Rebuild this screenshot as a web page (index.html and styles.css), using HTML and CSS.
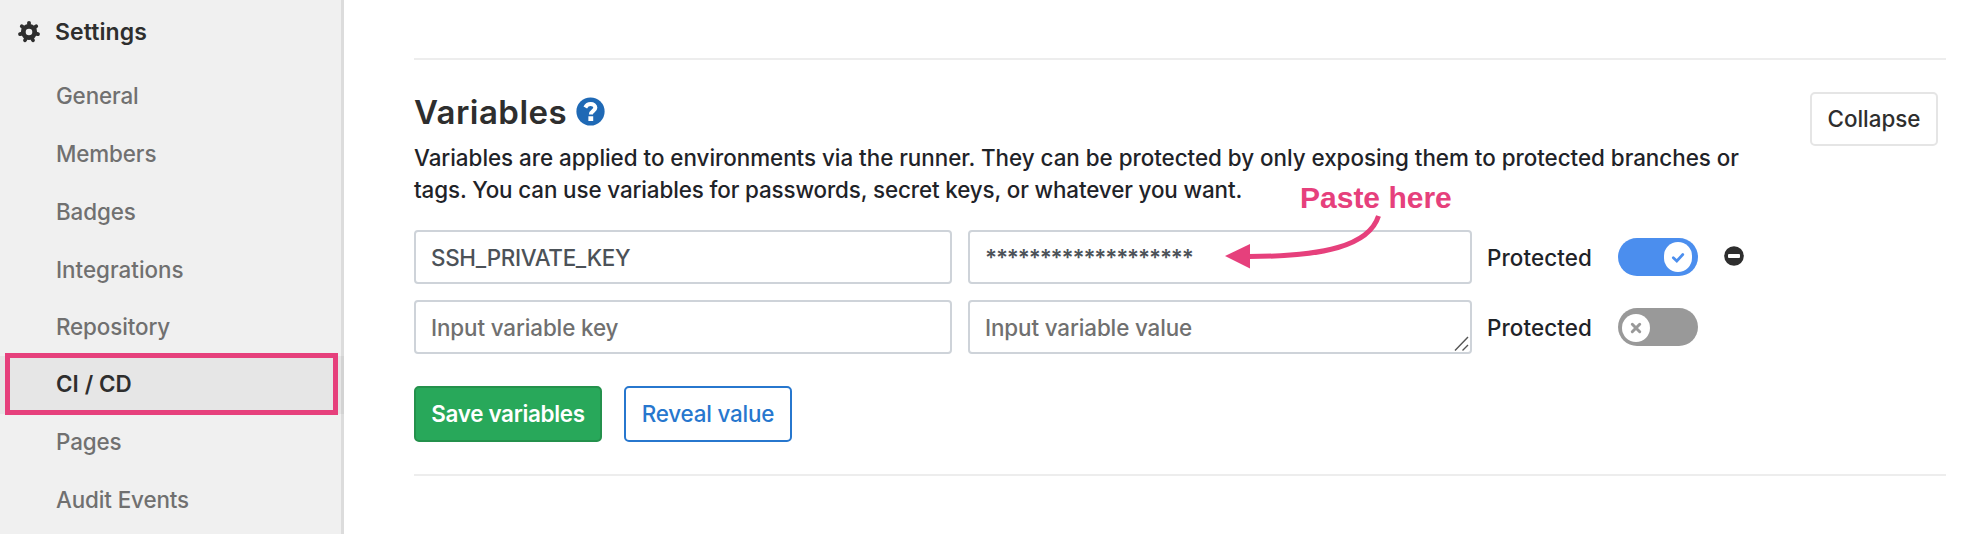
FILE: index.html
```html
<!DOCTYPE html>
<html lang="en">
<head>
<meta charset="utf-8">
<title>CI / CD Settings</title>
<link rel="stylesheet" href="styles.css">
</head>
<body>
<div class="page">
  <aside class="sidebar">
    <div class="sidebar-title">
      <svg class="gear" viewBox="0 0 24 24"><circle cx="12" cy="12" r="5.700" fill="none" stroke="#2e2e2e" stroke-width="4.800"/><g stroke="#2e2e2e" stroke-width="3.800" stroke-linecap="round"><path id="tooth" d="M12 4V2.800"/><use href="#tooth" transform="rotate(51.43 12 12)"/><use href="#tooth" transform="rotate(102.86 12 12)"/><use href="#tooth" transform="rotate(154.29 12 12)"/><use href="#tooth" transform="rotate(205.71 12 12)"/><use href="#tooth" transform="rotate(257.14 12 12)"/><use href="#tooth" transform="rotate(308.57 12 12)"/></g></svg>
      <span class="t-settings">Settings</span>
    </div>
    <nav class="menu">
      <a class="item"><span>General</span></a>
      <a class="item"><span>Members</span></a>
      <a class="item"><span>Badges</span></a>
      <a class="item"><span class="ls-0">Integrations</span></a>
      <a class="item item-short"><span>Repository</span></a>
      <a class="item item-active"><span class="ls-1">CI / CD</span><i class="marker"></i></a>
      <a class="item"><span>Pages</span></a>
      <a class="item"><span>Audit Events</span></a>
    </nav>
  </aside>
  <main class="content">
    <section class="variables">
      <header class="header">
        <div class="intro">
          <h4 class="heading"><span class="t-heading">Variables</span>
            <svg class="help" viewBox="0 0 30 30"><circle cx="15" cy="15" r="14.600" fill="#1f69b5"/><path d="M9.600 10.800C10.900 8.400 12.700 7.300 15.100 7.300C17.900 7.300 20 8.900 20 11.200C20 14.300 15.400 14.500 15.400 18.100" fill="none" stroke="#fff" stroke-width="4.200"/><path d="M12.800 20h5v4.800h-5z" fill="#fff"/></svg>
          </h4>
          <p class="desc"><span class="t-desc">Variables are applied to environments via the runner. They can be protected by only exposing them to protected branches or</span><br><span>tags. You can use variables for passwords, secret keys, or whatever you want.</span></p>
        </div>
        <button class="btn btn-collapse"><span class="ls-0">Collapse</span></button>
      </header>
      <div class="row">
        <div class="field field-key"><span class="t-key">SSH_PRIVATE_KEY</span></div>
        <div class="field field-value"><span class="t-stars">*******************</span>
          <div class="note"><span class="note-text">Paste here</span>
            <svg class="arrow" viewBox="0 0 160 60"><path d="M153.500 6C144 36 98 46.500 24 46.500" fill="none" stroke="#e6407c" stroke-width="5"/><path d="M0 46L25 34V58.500Z" fill="#e6407c"/></svg>
          </div>
        </div>
        <span class="label"><span class="ls-1">Protected</span></span>
        <span class="toggle toggle-on"><svg class="knob" viewBox="0 0 28 30"><rect width="28" height="30" rx="14" fill="#fff"/><path d="M9.300 15.700L12.800 19L18.800 12.500" fill="none" stroke="#4b8eee" stroke-width="2.700" stroke-linecap="round"/></svg></span>
        <svg class="remove" viewBox="0 0 20 20"><circle cx="10" cy="10" r="9.800" fill="#2e2e2e"/><rect x="4" y="8" width="12" height="4" rx="1" fill="#fff"/></svg>
      </div>
      <div class="row">
        <div class="field field-key placeholder"><span>Input variable key</span></div>
        <div class="field field-value placeholder"><span>Input variable value</span>
          <svg class="grip" viewBox="0 0 15 15"><path d="M1 14.500L14 1M8.500 14.500L14 9" stroke="#555" stroke-width="1.400"/></svg>
        </div>
        <span class="label"><span class="ls-1">Protected</span></span>
        <span class="toggle"><svg class="knob" viewBox="0 0 28 28"><circle cx="14" cy="14" r="14" fill="#fff"/><path d="M10.300 10.300L17.700 17.700M17.700 10.300L10.300 17.700" stroke="#999" stroke-width="3" stroke-linecap="round"/></svg></span>
      </div>
      <div class="actions">
        <button class="btn btn-save"><span class="t-save">Save variables</span></button>
        <button class="btn btn-reveal"><span class="t-reveal">Reveal value</span></button>
      </div>
    </section>
  </main>
</div>
</body>
</html>
```
FILE: styles.css
```css
* { box-sizing: border-box; }
body { margin: 0; background: #fff; font-family: Inter, "Liberation Sans", sans-serif; font-size: 22.4px; font-weight: 450; letter-spacing: -.12px; color: #1f2328; }
.page { display: flex; width: 1984px; height: 534px; overflow: hidden; }
.page span { white-space: nowrap; }
.ls-0 { letter-spacing: 0; }
.ls-1 { letter-spacing: .1px; }
.sidebar { width: 344px; flex: none; background: #f0f0f0; box-shadow: inset -3px 0 0 #dcdcdc; }
.sidebar-title { display: flex; align-items: center; height: 68px; padding: 0 0 4px 17px; gap: 14px; font-weight: 600; color: #2e2e2e; }
.t-settings { font-size: 23px; letter-spacing: .1px; }
.gear { width: 24px; height: 24px; }
.menu { display: flex; flex-direction: column; }
.item { position: relative; display: flex; align-items: center; height: 58px; padding: 0 0 3px 56px; color: #707070; }
.item-short { height: 56px; }
.item-active { background: rgba(0, 0, 0, .04); color: #2e2e2e; font-weight: 600; }
.marker { position: absolute; left: 4.5px; top: -3.5px; width: 333px; height: 62px; border: 5px solid #e6407c; }
.content { flex: 1; padding: 58px 38px 0 70px; }
.variables { height: 418px; border-top: 2px solid #ededed; border-bottom: 2px solid #ededed; }
.header { display: flex; justify-content: space-between; align-items: flex-start; height: 170px; padding: 32px 8px 0 0; }
.heading { display: flex; align-items: center; gap: 9px; height: 39px; margin: 0; font-size: 33px; font-weight: 600; color: #2e2e2e; }
.t-heading { width: 153px; letter-spacing: .45px; }
.help { width: 29px; height: 29px; }
.desc { margin: 11px 0 0; line-height: 32px; }
.t-desc { letter-spacing: -.025px; }
.btn { display: flex; align-items: center; justify-content: center; padding: 0; font: inherit; border: 2px solid; border-radius: 5px; background: #fff; }
.btn-collapse { width: 128px; height: 54px; padding-bottom: 2px; border-color: #e5e5e5; color: #2e2e2e; }
.row { display: flex; align-items: center; height: 54px; margin-bottom: 16px; }
.field { position: relative; display: flex; align-items: center; height: 54px; padding-left: 15px; border: 2px solid #ced3d9; border-radius: 4px; color: #4c5258; }
.field-key { width: 538px; margin-right: 16px; }
.field-value { width: 504px; }
.t-key { letter-spacing: -.3px; }
.t-stars { font-weight: 600; letter-spacing: -1.15px; }
.placeholder { color: #707070; }
.label { width: 146px; padding-left: 15px; }
.toggle { display: flex; align-items: center; width: 80px; height: 38px; padding: 2px 4px 0; border-radius: 19px; background: #999; }
.toggle-on { justify-content: flex-end; padding: 0 6px; background: #4b8eee; }
.knob { width: 28px; height: 28px; }
.toggle-on .knob { height: 30px; }
.remove { width: 20px; height: 20px; margin: 0 0 2px 26px; }
.grip { position: absolute; right: 1px; bottom: 1px; width: 15px; height: 15px; }
.note { position: absolute; left: 255px; top: -54px; width: 240px; }
.note-text { display: block; width: max-content; margin-left: 75px; font: bold 30px/40px "Liberation Sans", sans-serif; letter-spacing: 0; color: #e6407c; }
.arrow { position: absolute; left: 0; top: 32px; width: 160px; height: 60px; }
.actions { display: flex; gap: 22px; padding-top: 16px; }
.btn-save { width: 188px; height: 56px; padding-bottom: 1px; border-color: #24914c; background: #28a85a; color: #fff; font-weight: 600; }
.t-save { letter-spacing: -.3px; }
.btn-reveal { width: 168px; height: 56px; padding-bottom: 1px; border-color: #2777ce; color: #2777ce; }
.t-reveal { letter-spacing: -.2px; }
```
